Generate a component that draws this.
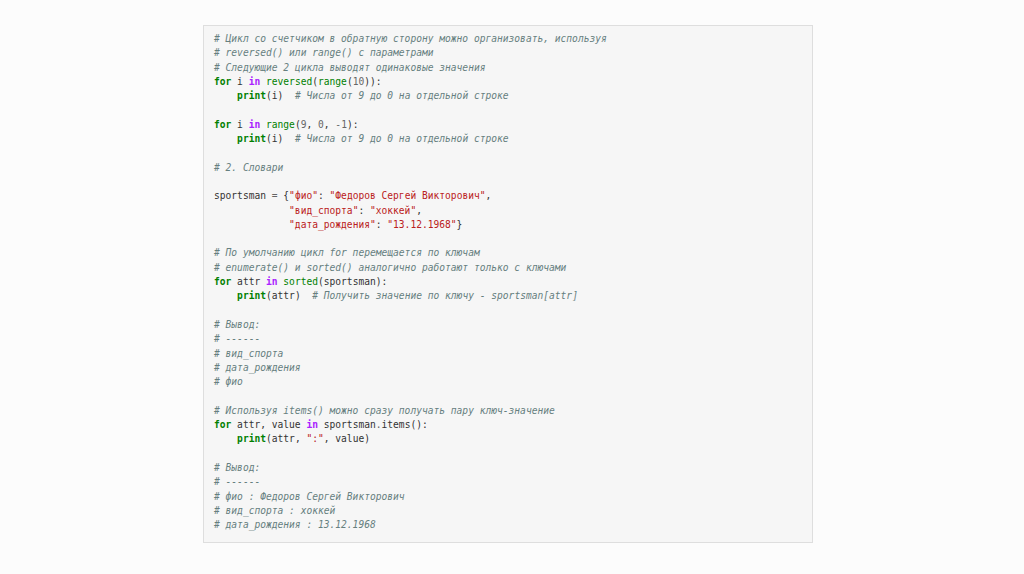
import React from "react";

// token helpers
const C = ({ children }: { children: React.ReactNode }) => (
  <span className="italic text-[#667f7f]">{children}</span>
);
const K = ({ children }: { children: React.ReactNode }) => (
  <span className="font-bold text-[#008000]">{children}</span>
);
const KIn = () => <span className="font-bold text-[#aa22ff]">in</span>;
const B = ({ children }: { children: React.ReactNode }) => (
  <span className="text-[#008000]">{children}</span>
);
const S = ({ children }: { children: React.ReactNode }) => (
  <span className="text-[#ba2121]">{children}</span>
);
const N = ({ children }: { children: React.ReactNode }) => (
  <span className="text-[#666666]">{children}</span>
);

const lines: React.ReactNode[] = [
  <C># Цикл со счетчиком в обратную сторону можно организовать, используя</C>,
  <C># reversed() или range() с параметрами</C>,
  <C># Следующие 2 цикла выводят одинаковые значения</C>,
  <>
    <K>for</K> i <KIn /> <B>reversed</B>(<B>range</B>(<N>10</N>)):
  </>,
  <>
    {"    "}
    <K>print</K>(i){"  "}
    <C># Числа от 9 до 0 на отдельной строке</C>
  </>,
  "",
  <>
    <K>for</K> i <KIn /> <B>range</B>(<N>9</N>, <N>0</N>, <N>-</N><N>1</N>):
  </>,
  <>
    {"    "}
    <K>print</K>(i){"  "}
    <C># Числа от 9 до 0 на отдельной строке</C>
  </>,
  "",
  <C># 2. Словари</C>,
  "",
  <>
    sportsman <N>=</N> {"{"}
    <S>"фио"</S>: <S>"Федоров Сергей Викторович"</S>,
  </>,
  <>
    {"             "}
    <S>"вид_спорта"</S>: <S>"хоккей"</S>,
  </>,
  <>
    {"             "}
    <S>"дата_рождения"</S>: <S>"13.12.1968"</S>
    {"}"}
  </>,
  "",
  <C># По умолчанию цикл for перемещается по ключам</C>,
  <C># enumerate() и sorted() аналогично работают только с ключами</C>,
  <>
    <K>for</K> attr <KIn /> <B>sorted</B>(sportsman):
  </>,
  <>
    {"    "}
    <K>print</K>(attr){"  "}
    <C># Получить значение по ключу - sportsman[attr]</C>
  </>,
  "",
  <C># Вывод:</C>,
  <C># ------</C>,
  <C># вид_спорта</C>,
  <C># дата_рождения</C>,
  <C># фио</C>,
  "",
  <C># Используя items() можно сразу получать пару ключ-значение</C>,
  <>
    <K>for</K> attr, value <KIn /> sportsman<N>.</N>items():
  </>,
  <>
    {"    "}
    <K>print</K>(attr, <S>":"</S>, value)
  </>,
  "",
  <C># Вывод:</C>,
  <C># ------</C>,
  <C># фио : Федоров Сергей Викторович</C>,
  <C># вид_спорта : хоккей</C>,
  <C># дата_рождения : 13.12.1968</C>,
];

export default function App() {
  return (
    <div className="w-[1024px] h-[574px] bg-[#fcfcfc] pt-[25px] pl-[203px]">
      <div className="w-[610px] h-[518px] border border-[#dedede] bg-[#f6f6f6] pt-[6px] pl-[10px]">
        <pre className="font-['DejaVu_Sans_Mono',monospace] text-[9.6px] leading-[14.3px] text-[#333333]">
          {lines.map((l, i) => (
            <div key={i} className="h-[14.3px] whitespace-pre">
              {l === "" ? " " : l}
            </div>
          ))}
        </pre>
      </div>
    </div>
  );
}
